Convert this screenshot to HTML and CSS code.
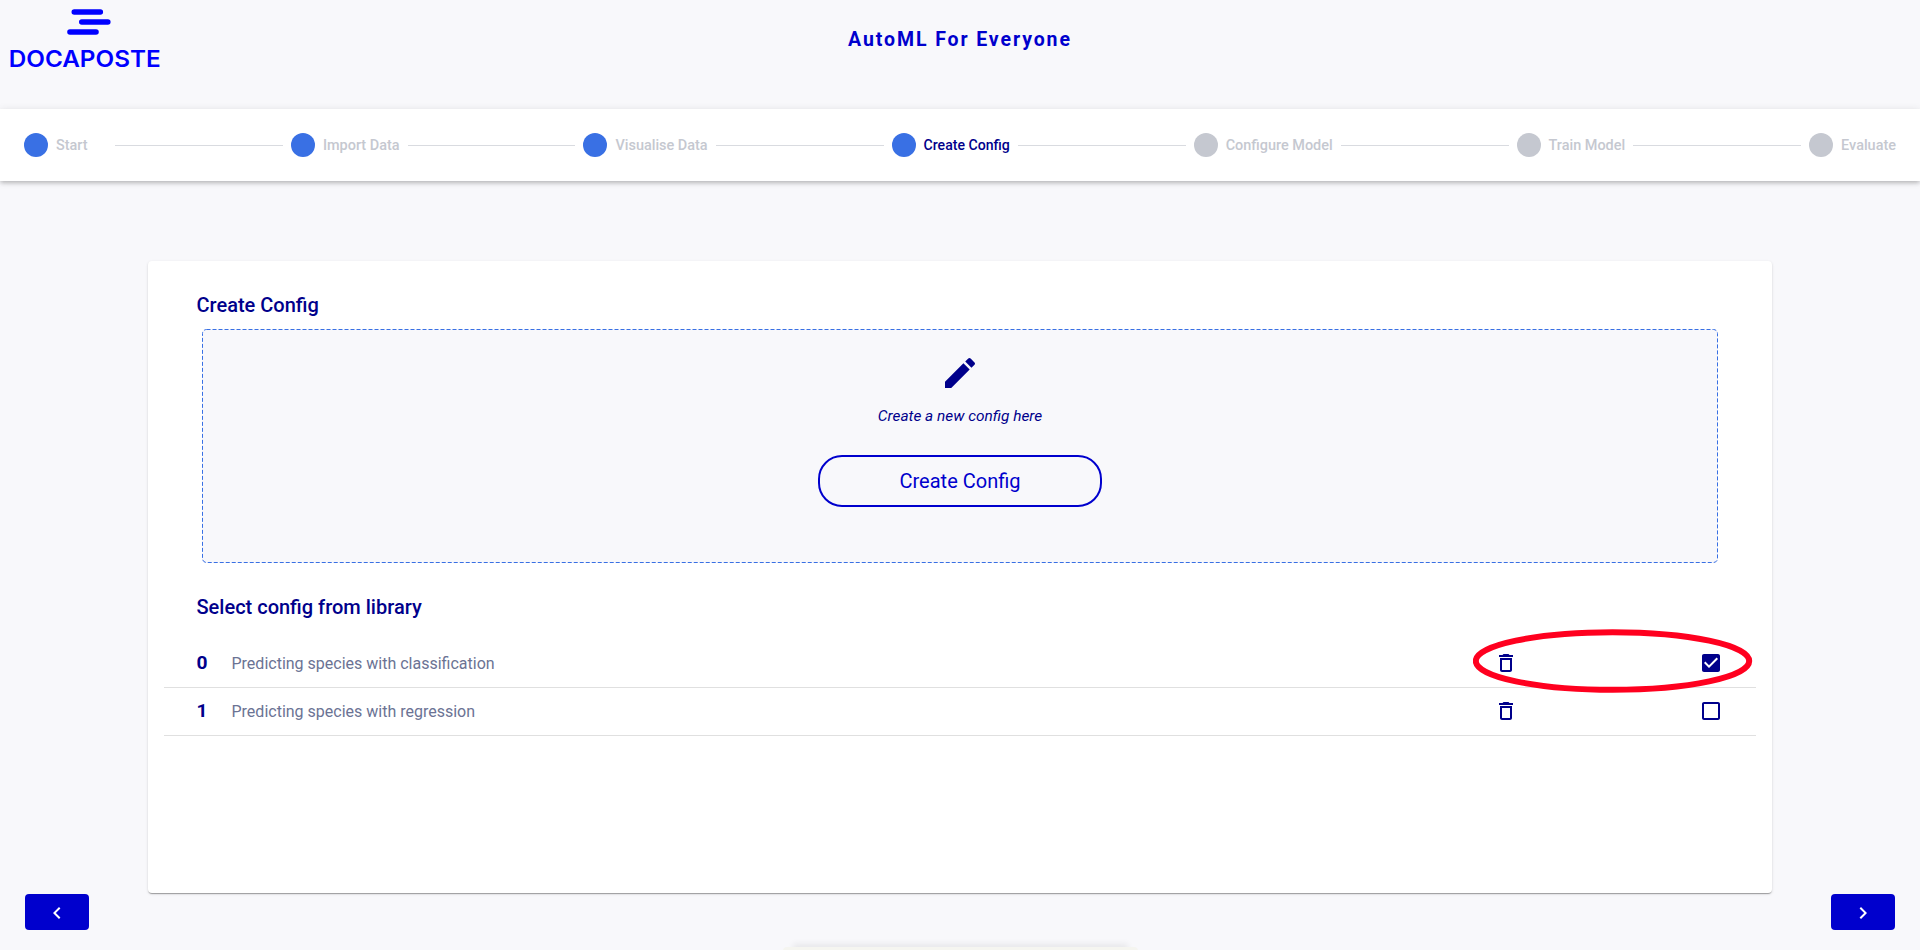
FILE: index.html
```html
<!DOCTYPE html>
<html lang="en">
<head>
<meta charset="utf-8">
<title>AutoML For Everyone</title>
<link rel="stylesheet" href="styles.css">
</head>
<body>
<header class="header">
  <svg class="logo" width="152" height="66" viewBox="0 0 152 66" fill="#00f" stroke="#00f">
    <path d="M65.300 6h26M72.800 16h26M61 26h26" stroke-width="5.600" stroke-linecap="round"/>
    <text class="logo-text" x="-.3" y="61.300" textLength="152" lengthAdjust="spacingAndGlyphs" stroke="none">DOCAPOSTE</text>
  </svg>
  <h1 class="title">AutoML For Everyone</h1>
  <div class="header-side"></div>
</header>
<nav class="stepper">
  <div class="step step-first done"><i class="dot"></i><span class="step-label">Start</span></div><i class="line"></i>
  <div class="step done"><i class="dot"></i><span class="step-label">Import Data</span></div><i class="line"></i>
  <div class="step done"><i class="dot"></i><span class="step-label">Visualise Data</span></div><i class="line"></i>
  <div class="step done active"><i class="dot"></i><span class="step-label">Create Config</span></div><i class="line"></i>
  <div class="step"><i class="dot"></i><span class="step-label">Configure Model</span></div><i class="line"></i>
  <div class="step"><i class="dot"></i><span class="step-label">Train Model</span></div><i class="line"></i>
  <div class="step"><i class="dot"></i><span class="step-label">Evaluate</span></div>
</nav>
<main class="card">
  <h2 class="heading">Create Config</h2>
  <section class="create">
    <svg class="outline" width="1517" height="235"><rect x=".5" y=".5" width="1515" height="233" rx="4" fill="none" stroke="#3970e4" stroke-dasharray="4 2"/></svg>
    <svg width="40" height="40" viewBox="0 0 24 24" fill="#00008b"><path d="M3 17.250V21h3.750L17.810 9.940l-3.750-3.750L3 17.250zM20.710 7.040c.39-.39.39-1.020 0-1.410l-2.340-2.340a.9959.9959 0 0 0-1.410 0l-1.830 1.830 3.750 3.750 1.830-1.830z"/></svg>
    <p class="hint">Create a new config here</p>
    <button class="create-button">Create Config</button>
  </section>
  <h2 class="heading heading-library">Select config from library</h2>
  <ul class="configs">
    <li class="config">
      <b class="index">0</b><span class="name">Predicting species with classification</span>
      <svg class="trash" width="24" height="24" viewBox="0 0 24 24"><path d="M6 19c0 1.1.9 2 2 2h8c1.1 0 2-.9 2-2V7H6v12zM8 9h8v10H8V9zm7.500-5l-1-1h-5l-1 1H5v2h14V4z"/></svg>
      <svg class="check" width="24" height="24" viewBox="0 0 24 24"><path d="M19 3H5c-1.110 0-2 .9-2 2v14c0 1.100.89 2 2 2h14c1.110 0 2-.9 2-2V5c0-1.100-.89-2-2-2zm-9 14l-5-5 1.410-1.410L10 14.170l7.590-7.590L19 8l-9 9z"/></svg>
      <svg class="mark" width="280" height="66" viewBox="0 0 280 66"><ellipse cx="139.500" cy="32" rx="136.700" ry="28.800" fill="none" stroke="#ff001f" stroke-width="6"/></svg>
    </li>
    <li class="config">
      <b class="index">1</b><span class="name">Predicting species with regression</span>
      <svg class="trash" width="24" height="24" viewBox="0 0 24 24"><path d="M6 19c0 1.1.9 2 2 2h8c1.1 0 2-.9 2-2V7H6v12zM8 9h8v10H8V9zm7.500-5l-1-1h-5l-1 1H5v2h14V4z"/></svg>
      <svg class="check" width="24" height="24" viewBox="0 0 24 24"><path d="M19 5v14H5V5h14m0-2H5c-1.100 0-2 .9-2 2v14c0 1.100.9 2 2 2h14c1.100 0 2-.9 2-2V5c0-1.100-.9-2-2-2z"/></svg>
    </li>
  </ul>
</main>
<footer class="footer">
  <button class="nav-button"><svg width="24" height="24" viewBox="0 0 24 24" fill="#fff"><path d="M15.410 7.410L14 6l-6 6 6 6 1.410-1.410L10.830 12z"/></svg></button>
  <button class="nav-button"><svg width="24" height="24" viewBox="0 0 24 24" fill="#fff"><path d="M10 6L8.590 7.410 13.170 12l-4.580 4.590L10 18l6-6z"/></svg></button>
</footer>
<div class="snackbar"></div>
</body>
</html>
```
FILE: styles.css
```css
* { box-sizing: border-box; }
body {
  margin: 0;
  height: 950px;
  overflow: hidden;
  position: relative;
  background: #f8f8fb;
  font-family: Roboto, "Liberation Sans", sans-serif;
  color: #00008b;
}
.header {
  display: flex;
  justify-content: space-between;
  height: 109px;
  padding: 6px 9px 0;
}
.logo { overflow: visible; }
.logo-text { font: 600 22.6px Inter, sans-serif; }
.title {
  margin: 22px 0 0;
  font-size: 19.5px;
  line-height: 24px;
  font-weight: 700;
  letter-spacing: 1.9px;
  color: #0000cd;
}
.header-side { width: 152px; }
.stepper {
  display: flex;
  align-items: center;
  height: 72px;
  padding: 0 24px;
  background: #fff;
  box-shadow: 0 2px 4px -1px rgba(0,0,0,.16), 0 3px 4px 0 rgba(0,0,0,.08), 0 1px 8px 0 rgba(0,0,0,.1);
}
.step { display: flex; align-items: center; padding: 0 8px; }
.step-first { padding-left: 0; width: 91px; }
.step:last-child { padding-right: 0; }
.dot {
  width: 24px;
  height: 24px;
  margin-right: 8px;
  border-radius: 50%;
  background: #c5c8d0;
}
.done .dot { background: #3970e4; }
.step-label {
  padding-top: 1px;
  font-size: 14.45px;
  line-height: 20px;
  font-weight: 500;
  color: #c5c8d0;
  white-space: nowrap;
}
.active .step-label { padding-top: 0; color: #00008b; font-size: 14.1px; }
.line { flex: 1; height: 1px; margin-top: 1px; background: #d9dbe0; }
.card {
  width: 1624px;
  height: 632px;
  margin: 80px auto 0;
  padding: 32px 16px 0;
  background: #fff;
  border-radius: 4px;
  box-shadow: 0 2px 1px -1px rgba(0,0,0,.2), 0 1px 1px 0 rgba(0,0,0,.14), 0 1px 3px 0 rgba(0,0,0,.12);
}
.heading {
  margin: 0 0 0 32.5px;
  font-size: 20px;
  line-height: 24px;
  font-weight: 500;
}
.create {
  position: relative;
  display: flex;
  flex-direction: column;
  align-items: center;
  height: 234px;
  margin: 12px 38px 0;
  padding-top: 24px;
  background: #f8f8fb;
  border-radius: 4px;
}
.outline { position: absolute; top: 0; left: 0; }
.hint { margin: 12px 0 28px; font-size: 15.4px; line-height: 22px; font-style: italic; }
.create-button {
  width: 284px;
  height: 52px;
  border: 2px solid #0000cd;
  border-radius: 24px;
  background: transparent;
  color: #0000cd;
  font: 400 20px Roboto, sans-serif;
}
.heading-library { margin-top: 32px; }
.configs { margin: 21px 0 0; padding: 0; list-style: none; }
.config {
  position: relative;
  display: grid;
  grid-template-columns: 35px 1fr 205px 57px;
  align-items: center;
  height: 48px;
  padding-left: 32.5px;
  border-bottom: 1px solid #e0e0e0;
}
.index { font-size: 19.2px; line-height: 22px; margin-top: -2px; }
.name { font-size: 16px; color: #6b7394; }
.trash, .check { fill: #00008b; margin-top: -1px; }
.mark { position: absolute; left: 1309px; top: -11px; }
.footer { display: flex; justify-content: space-between; margin-top: 1px; padding: 0 25px; }
.nav-button {
  display: flex;
  align-items: center;
  justify-content: center;
  width: 64px;
  height: 36px;
  padding: 2px 0 0;
  border: 0;
  border-radius: 4px;
  background: #0000cd;
}
.snackbar {
  position: absolute;
  top: 947px;
  left: 783px;
  width: 355px;
  height: 40px;
  border-radius: 4px;
  background: #f5f5f0;
  box-shadow: 0 -13px 6px -10px rgba(0,0,0,.07);
}
```
